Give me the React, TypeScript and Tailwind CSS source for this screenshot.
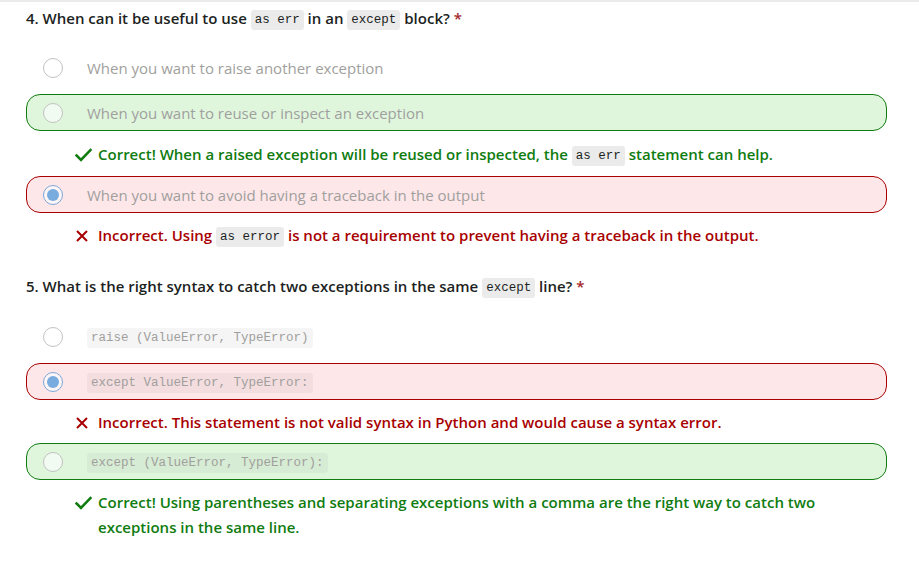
import React from "react";

type Status = "none" | "correct" | "incorrect";

const Code = ({ children, muted }: { children: React.ReactNode; muted?: boolean }) => (
  <code
    className={
      "inline-block rounded-[3px] px-[4px] py-[3px] align-[1px] text-[12.5px] font-normal leading-[14px] " +
      (muted ? "bg-[rgba(0,0,0,0.04)] text-[#a19f9d]" : "bg-[#ebebeb] text-[#201f1e]")
    }
    style={{ fontFamily: "Consolas, 'Liberation Mono', 'DejaVu Sans Mono', monospace" }}
  >
    {children}
  </code>
);

const Radio = ({ checked }: { checked?: boolean }) => (
  <span
    className={
      "flex h-[20px] w-[20px] shrink-0 items-center justify-center rounded-full border bg-[rgba(255,255,255,0.6)] " +
      (checked ? "border-[#7ba7d9]" : "border-[#c2c2c2]")
    }
  >
    {checked && <span className="h-[12px] w-[12px] rounded-full bg-[#78acdf]" />}
  </span>
);

const Option = ({
  status,
  checked,
  children,
}: {
  status: Status;
  checked?: boolean;
  children: React.ReactNode;
}) => {
  const cls =
    status === "correct"
      ? "border-[#107c10] bg-[#dff6dd]"
      : status === "incorrect"
      ? "border-[#a80000] bg-[#fde7e9]"
      : "border-transparent";
  return (
    <div className={"flex h-[37px] shrink-0 items-center gap-[24px] rounded-[14px] border pl-[16px] " + cls}>
      <Radio checked={checked} />
      <span className="text-[15px] leading-[20px] text-[#a19f9d]">{children}</span>
    </div>
  );
};

const Check = () => (
  <svg width="17" height="14" viewBox="0 0 17 14" className="shrink-0">
    <path d="M1.5 7.5 L6 12 L15.5 2" fill="none" stroke="#107c10" strokeWidth="2.6" strokeLinecap="square" />
  </svg>
);

const Cross = () => (
  <svg width="14" height="14" viewBox="0 0 14 14" className="shrink-0">
    <path d="M2 2 L12 12 M12 2 L2 12" fill="none" stroke="#a80000" strokeWidth="2" />
  </svg>
);

const Feedback = ({
  ok,
  pad,
  children,
}: {
  ok: boolean;
  pad: string;
  children: React.ReactNode;
}) => (
  <div
    className={
      "flex pl-[49px] pr-[60px] text-[15px] font-semibold leading-[25px] " +
      pad +
      " " +
      (ok ? "text-[#107c10]" : "text-[#a80000]")
    }
  >
    <span className="flex h-[25px] w-[23px] shrink-0 items-center">
      {ok ? <Check /> : <Cross />}
    </span>
    <span>{children}</span>
  </div>
);

const Question = ({ children }: { children: React.ReactNode }) => (
  <div className="h-[25px] text-[15px] font-semibold leading-[22px] text-[#201f1e]">
    {children} <span className="text-[#a4262c]">*</span>
  </div>
);

export default function App() {
  return (
    <div
      className="min-h-[572px] w-[919px] border-t-2 border-[#ebebeb] bg-white pl-[26px] pr-[32px] pt-[5px]"
      style={{ fontFamily: "'Open Sans', 'Noto Sans', sans-serif" }}
    >
      <Question>
        4. When can it be useful to use <Code>as err</Code> in an <Code>except</Code> block?
      </Question>
      <div className="mt-[17px] flex flex-col">
        <Option status="none">When you want to raise another exception</Option>
        <div className="mt-[8px]">
          <Option status="correct">When you want to reuse or inspect an exception</Option>
        </div>
        <Feedback ok pad="pt-[11px] pb-[9px]">
          Correct! When a raised exception will be reused or inspected, the <Code>as err</Code> statement can help.
        </Feedback>
        <Option status="incorrect" checked>
          When you want to avoid having a traceback in the output
        </Option>
        <Feedback ok={false} pad="pt-[10px] pb-[9px]">
          Incorrect. Using <Code>as error</Code> is not a requirement to prevent having a traceback in the output.
        </Feedback>
      </div>

      <div className="mt-[18px]">
        <Question>
          5. What is the right syntax to catch two exceptions in the same <Code>except</Code> line?
        </Question>
      </div>
      <div className="mt-[18px] flex flex-col">
        <Option status="none">
          <Code muted>raise (ValueError, TypeError)</Code>
        </Option>
        <div className="mt-[8px]">
          <Option status="incorrect" checked>
            <Code muted>except ValueError, TypeError:</Code>
          </Option>
        </div>
        <Feedback ok={false} pad="pt-[10px] pb-[8px]">
          Incorrect. This statement is not valid syntax in Python and would cause a syntax error.
        </Feedback>
        <Option status="correct">
          <Code muted>except (ValueError, TypeError):</Code>
        </Option>
        <Feedback ok pad="pt-[10px] pb-[9px]">
          Correct! Using parentheses and separating exceptions with a comma are the right way to catch two
          exceptions in the same line.
        </Feedback>
      </div>
    </div>
  );
}
